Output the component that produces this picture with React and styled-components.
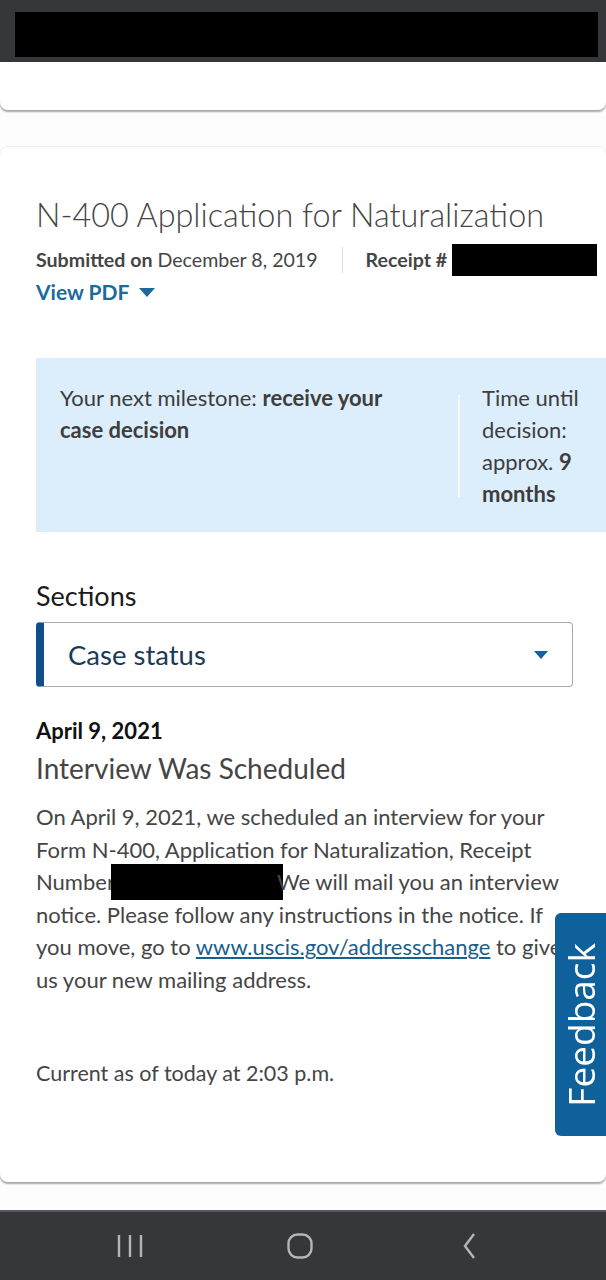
import React from "react";
import styled, { createGlobalStyle } from "styled-components";

const GlobalStyle = createGlobalStyle`
  html, body {
    margin: 0;
    padding: 0;
    background: #fdfdfd;
  }
  body {
    font-family: "Lato", "Noto Sans", sans-serif;
    color: #454545;
  }
  * {
    box-sizing: border-box;
  }
`;

const Page = styled.div`
  display: flex;
  flex-direction: column;
  width: 606px;
  height: 1280px;
  overflow: hidden;
`;

const StatusBar = styled.div`
  height: 62px;
  flex-shrink: 0;
  background: #36373b;
  padding: 12px 8px 5px 15px;
`;

const Redacted = styled.span`
  display: ${(p) => (p.$block ? "block" : "inline-block")};
  flex-shrink: 0;
  background: #000;
  width: ${(p) => p.$w}px;
  height: ${(p) => p.$h}px;
  vertical-align: middle;
`;

const PrevCard = styled.div`
  height: 48px;
  flex-shrink: 0;
  background: #fff;
  border-radius: 0 0 8px 8px;
  box-shadow: 0 2px 2px rgba(0, 0, 0, 0.35);
`;

const Card = styled.section`
  margin-top: 36px;
  flex-shrink: 0;
  background: #fff;
  border-radius: 8px;
  border-top: 1px solid #efefef;
  box-shadow: 0 2px 2px rgba(0, 0, 0, 0.35);
  padding: 46px 0 93px 36px;
  overflow: hidden;
`;

const Title = styled.h1`
  margin: 0;
  font-size: 32.4px;
  font-weight: 300;
  line-height: 44px;
  color: #454545;
`;

const MetaRow = styled.div`
  display: flex;
  align-items: center;
  margin-top: 7px;
  font-size: 19.6px;
  line-height: 32px;
  color: #454545;
  white-space: nowrap;
`;

const Bold = styled.b`
  font-weight: 700;
`;

const MetaSep = styled.span`
  flex-shrink: 0;
  width: 1px;
  height: 26px;
  background: #dcdcdc;
  margin: 0 23px 0 24px;
`;

const PdfLink = styled.a`
  display: inline-flex;
  align-items: center;
  gap: 10px;
  font-size: 21px;
  font-weight: 700;
  color: #1a6a9c;
  line-height: 32px;
  text-decoration: none;
`;

const Milestone = styled.div`
  display: flex;
  margin-top: 50px;
  background: #dcedfb;
  padding: 24px 24px 22px 24px;
  font-size: 22px;
  line-height: 32px;
  color: #3d3d3d;
`;

const MilestoneText = styled.div`
  flex: ${(p) => (p.$fixed ? "0 0 100px" : "1")};
  padding-right: ${(p) => (p.$fixed ? 0 : 30)}px;
`;

const MilestoneDivider = styled.div`
  flex-shrink: 0;
  width: 2px;
  background: #f4f9fe;
  margin: 13px 22px;
  align-self: stretch;
`;

const SectionsLabel = styled.div`
  margin-top: 46px;
  font-size: 27px;
  line-height: 36px;
  color: #1b1b1b;
`;

const Select = styled.div`
  display: flex;
  align-items: center;
  justify-content: space-between;
  width: 537px;
  height: 65px;
  margin-top: 8px;
  border: 1px solid #a9a9a9;
  border-left: 8px solid #0e4f8b;
  border-radius: 4px;
  padding: 0 24px;
  font-size: 27.5px;
  color: #1b3a57;
`;

const EventDate = styled.div`
  margin-top: 31px;
  font-size: 22px;
  font-weight: 700;
  line-height: 26px;
  color: #111;
`;

const EventTitle = styled.h2`
  margin: 6px 0 0;
  font-size: 28px;
  font-weight: 400;
  line-height: 36px;
  color: #454545;
`;

const Body = styled.p`
  margin: 15px 0 0;
  font-size: 22px;
  line-height: 32.6px;
  color: #454545;
  width: 545px;
`;

const InlineRedaction = styled(Redacted)`
  margin: -3px -6px -3px -4px;
  vertical-align: -7px;
`;

const Link = styled.a`
  color: #1a5e8a;
  text-decoration: underline;
`;

const Updated = styled.p`
  margin: 60px 0 0;
  font-size: 21.5px;
  line-height: 32px;
  color: #454545;
`;

const FeedbackTab = styled.div`
  position: fixed;
  right: 0;
  top: 913px;
  width: 51px;
  height: 223px;
  background: #0f619b;
  border-radius: 6px 0 0 6px;
  display: flex;
  align-items: center;
  justify-content: center;
`;

const FeedbackText = styled.span`
  writing-mode: vertical-rl;
  transform: rotate(180deg);
  font-family: "Open Sans", sans-serif;
  font-size: 37px;
  color: #fff;
  line-height: 1;
`;

const NavBar = styled.nav`
  margin-top: auto;
  height: 70px;
  flex-shrink: 0;
  background: #36373b;
  border-top: 2px solid #56575b;
  display: grid;
  grid-template-columns: repeat(3, 170px);
  justify-items: center;
  align-items: center;
  padding-left: 45px;
`;

const NavIcon = styled.svg`
  width: 28px;
  height: 28px;
  stroke: #b4b5b8;
  fill: none;
`;

const Caret = ({ color, w = 16, h = 9 }) => (
  <svg width={w} height={h} viewBox="0 0 16 9">
    <path d="M0 0h16L8 9z" fill={color} />
  </svg>
);

export default function App() {
  return (
    <Page>
      <GlobalStyle />
      <StatusBar>
        <Redacted $block $w={583} $h={45} />
      </StatusBar>
      <PrevCard />
      <Card>
        <Title>N-400 Application for Naturalization</Title>
        <MetaRow>
          <span>
            <Bold>Submitted on</Bold> December 8, 2019
          </span>
          <MetaSep />
          <Bold>Receipt #</Bold>
          <Redacted $w={145} $h={32} style={{ marginLeft: 5 }} />
        </MetaRow>
        <PdfLink href="#">
          View PDF <Caret color="#1a6a9c" />
        </PdfLink>

        <Milestone>
          <MilestoneText>
            Your next milestone: <Bold>receive your case decision</Bold>
          </MilestoneText>
          <MilestoneDivider />
          <MilestoneText $fixed>
            Time until decision: approx. <Bold>9 months</Bold>
          </MilestoneText>
        </Milestone>

        <SectionsLabel>Sections</SectionsLabel>
        <Select>
          <span>Case status</span>
          <Caret color="#1063a8" w={14} h={8} />
        </Select>

        <EventDate>April 9, 2021</EventDate>
        <EventTitle>Interview Was Scheduled</EventTitle>
        <Body>
          On April 9, 2021, we scheduled an interview for your Form N-400,
          Application for Naturalization, Receipt Number
          <InlineRedaction $w={172} $h={36} />
          We will mail you an interview notice. Please follow any instructions
          in the notice. If you move, go to{" "}
          <Link href="#">www.uscis.gov/addresschange</Link> to give us your new
          mailing address.
        </Body>
        <Updated>Current as of today at 2:03 p.m.</Updated>
      </Card>

      <FeedbackTab>
        <FeedbackText>Feedback</FeedbackText>
      </FeedbackTab>

      <NavBar>
        <NavIcon viewBox="0 0 28 28" strokeWidth="2.4">
          <path d="M3 3v22M14 3v22M25 3v22" />
        </NavIcon>
        <NavIcon viewBox="0 0 28 28" strokeWidth="2.4">
          <rect x="2.5" y="2.5" width="23" height="23" rx="9" />
        </NavIcon>
        <NavIcon viewBox="0 0 28 28" strokeWidth="2.4">
          <path d="M18 2L9 14l9 12" />
        </NavIcon>
      </NavBar>
    </Page>
  );
}
